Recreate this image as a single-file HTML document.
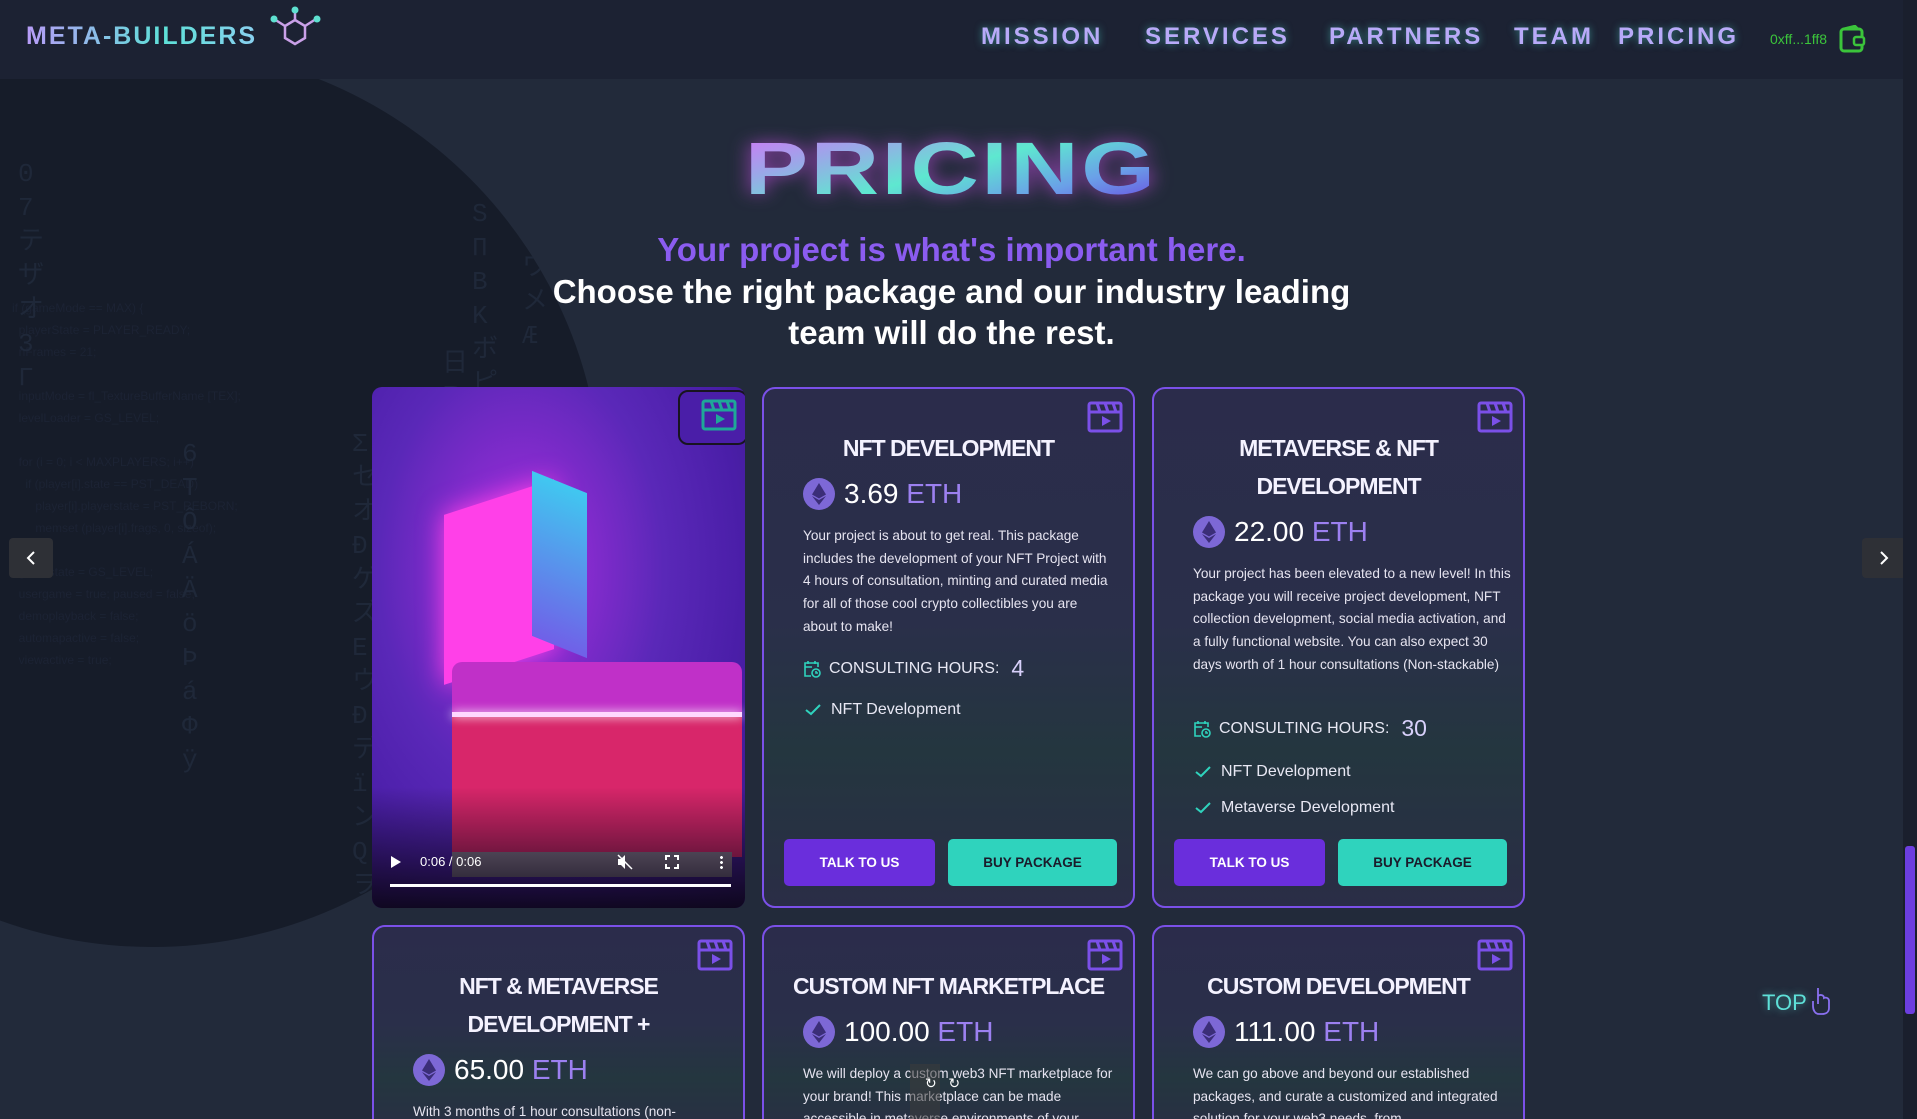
<!DOCTYPE html>
<html><head><meta charset="utf-8"><style>
*{margin:0;padding:0;box-sizing:border-box}
html,body{width:1917px;height:1119px;overflow:hidden;background:#222a3a;font-family:"Liberation Sans","DejaVu Sans",sans-serif;color:#fff;position:relative}
.circle{position:absolute;left:-298px;top:47px;width:900px;height:900px;border-radius:50%;background:#161c29;overflow:hidden}
.mx{position:absolute;color:#1f2839;font-family:"Liberation Mono","Noto Sans CJK JP",monospace;font-size:26px;line-height:34px;width:30px;word-break:break-all}
.code{position:absolute;color:#1c2334;font-size:12px;line-height:22px;white-space:pre}
header{position:absolute;left:0;top:0;width:1903px;height:79px;background:#1c2233}
.logo{position:absolute;left:26px;top:22px;font-weight:bold;font-size:25px;letter-spacing:2px;background:linear-gradient(90deg,#b89cf8,#5ee0d8 60%,#8ad0f0);-webkit-background-clip:text;color:transparent}
nav a{position:absolute;top:23px;font-weight:bold;font-size:24px;letter-spacing:3px;color:#b8aaf8;text-shadow:0 0 8px rgba(80,220,210,.55)}
.addr{position:absolute;left:1770px;top:31px;color:#3bc43b;font-size:14px}
.scroll{position:absolute;left:1903px;top:0;width:14px;height:1119px;background:#1a1f2d}
.thumb{position:absolute;left:1905px;top:846px;width:10px;height:168px;background:#6c3ee0;border-radius:3px}
h1{position:absolute;left:0;width:1903px;top:129px;text-align:center;font-size:74px;font-weight:bold;line-height:80px}
h1 span{display:inline-block;transform:scaleX(1.28);letter-spacing:2px;background:linear-gradient(160deg,#d672f8 0%,#9aa8e8 25%,#5ee8d0 50%,#6aa0e8 75%,#6a40e0 100%);-webkit-background-clip:text;color:transparent;filter:drop-shadow(0 0 8px rgba(200,80,230,.7))}
.sub{position:absolute;left:0;width:1903px;text-align:center;font-weight:bold;font-size:33px;line-height:41px}
.card{position:absolute;width:373px;border:2px solid #7b50e8;border-radius:13px;background:linear-gradient(180deg,#2b2c4b 0%,#2a2f4a 45%,#24363f 70%,#2a2d46 100%);overflow:hidden}
.clap{position:absolute;right:10px;top:12px}
.ct{position:absolute;left:0;width:100%;text-align:center;font-weight:bold;font-size:23px;letter-spacing:-1px;line-height:38px;color:#f4f2ff}
.price{position:absolute;left:39px;font-size:28px;display:flex;align-items:center;gap:9px;color:#fff}
.price b{font-weight:normal;color:#9c80f0}
.desc{position:absolute;left:39px;width:316px;font-size:13.6px;line-height:22.7px;color:#e6e4f0}
.ch{position:absolute;left:39px;font-size:16px;color:#e8e8f4;display:flex;align-items:center;gap:8px}
.ch big{font-size:23px;color:#d8d0fa;margin-left:4px}
.it{position:absolute;left:41px;font-size:16px;color:#e8e8f4;display:flex;align-items:center;gap:10px}
.btn{position:absolute;top:450px;height:47px;border-radius:5px;font-weight:bold;font-size:13.5px;display:flex;align-items:center;justify-content:center}
.talk{left:20px;width:151px;background:#6a2edc;color:#fff}
.buy{left:184px;width:169px;background:#2fd3bd;color:#1b1b2b}
.arr{position:absolute;width:44px;height:40px;border-radius:4px;background:#2e3036;color:#fff;display:flex;align-items:center;justify-content:center}
</style></head><body>
<div class="circle">
 <div class="code" style="left:310px;top:250px">if (gameMode == MAX) {
  playerState = PLAYER_READY;
  nFrames = 21;

  inputMode = fl_TextureBufferName [TEX];
  levelLoader = GS_LEVEL;

  for (i = 0; i &lt; MAXPLAYERS; i++)
    if (player[i].state == PST_DEAD)
       player[i].playerstate = PST_REBORN;
       memset (player[i].frags, 0, sizeof);

  gamestate = GS_LEVEL;
  usergame = true; paused = false;
  demoplayback = false;
  automapactive = false;
  viewactive = true;</div>
 <div class="mx" style="left:316px;top:110px">0 7 テザオ 3 Γ</div>
 <div class="mx" style="left:770px;top:150px">SΠBKボピò</div>
 <div class="mx" style="left:820px;top:170px">ΨワメÆ</div>
 <div class="mx" style="left:480px;top:390px">6 T Ô Á Ä ö Þ á Φ ÿ</div>
 <div class="mx" style="left:650px;top:380px">Σ セ オ Ð ゲ ズ E ウ Ð デ ï ン Q ヲ</div>
 <div class="mx" style="left:740px;top:300px">日 ℝ 五 ó ジ ワ Î ヰ セ ス ç b ë Í ü タ</div>
</div>

<header>
 <div class="logo">META-BUILDERS</div>
 <svg style="position:absolute;left:266px;top:4px" width="60" height="46" viewBox="0 0 60 46"><g stroke="#c9a0e8" stroke-width="2.5" fill="none"><path d="M29 16 L39 22 L39 34 L29 40 L19 34 L19 22 Z"/><path d="M29 16 V6 M39 22 L50 15 M19 22 L8 15"/></g><circle cx="29" cy="6" r="3.5" fill="#5ee0d0"/><circle cx="51" cy="15" r="3.5" fill="#5ee0d0"/><circle cx="8" cy="15" r="3.5" fill="#5ee0d0"/></svg>
 <nav><a style="left:981px">MISSION</a><a style="left:1145px">SERVICES</a><a style="left:1329px">PARTNERS</a><a style="left:1514px">TEAM</a><a style="left:1618px">PRICING</a></nav>
 <div class="addr">0xff...1ff8</div>
 <svg style="position:absolute;left:1839px;top:25px" width="27" height="28" viewBox="0 0 27 28"><rect x="2" y="4" width="21" height="22" rx="3" fill="none" stroke="#3bc43b" stroke-width="3"/><path d="M4 4 L16 1 L19 4" fill="none" stroke="#3bc43b" stroke-width="2.5"/><rect x="15" y="12" width="10" height="8" rx="2" fill="#1c2233" stroke="#3bc43b" stroke-width="2.5"/></svg>
</header>

<h1><span>PRICING</span></h1>
<div class="sub" style="top:229px;color:#8b5cf0">Your project is what's important here.</div>
<div class="sub" style="top:271px">Choose the right package and our industry leading<br>team will do the rest.</div>

<div style="position:absolute;left:372px;top:387px;width:373px;height:521px;border-radius:10px;overflow:hidden;background:radial-gradient(ellipse at 40% 35%,#c040e0 0%,#8a2cd0 18%,#5a28b8 45%,#4a1ea8 70%,#3a1a80 100%)">
 <div style="position:absolute;left:72px;top:110px;width:110px;height:170px;background:#ff40e8;transform:skewY(-18deg);box-shadow:0 0 25px #ff40e8"></div>
 <div style="position:absolute;left:160px;top:95px;width:55px;height:165px;background:linear-gradient(#40c8f0,#7060e8);transform:skewY(22deg)"></div>
 <div style="position:absolute;left:80px;top:275px;width:290px;height:65px;background:#c030c8;border-radius:10px 10px 0 0"></div>
 <div style="position:absolute;left:80px;top:330px;width:290px;height:140px;background:#d8266a"></div>
 <div style="position:absolute;left:80px;top:325px;width:290px;height:5px;background:#ffd8ff;box-shadow:0 0 10px #fff"></div>
 <div style="position:absolute;left:80px;top:465px;width:280px;height:25px;background:#8a7e90"></div>
 <div style="position:absolute;left:0;top:400px;width:100%;height:121px;background:linear-gradient(transparent,rgba(10,5,20,.9))"></div>
 <div style="position:absolute;left:306px;top:3px;width:70px;height:55px;border:2px solid #181420;border-radius:10px;background:#4a1ea8"></div>
 <svg class="clap" style="top:12px;right:8px" width="36" height="32" viewBox="0 0 36 32"><g fill="none" stroke="#1fa898" stroke-width="3"><rect x="2" y="2" width="32" height="28" rx="2"/><path d="M2 11 H34 M10 2 L13 11 M18 2 L21 11 M26 2 L29 11"/></g><path d="M15 15 L24 20 L15 25Z" fill="#1fa898"/></svg>
 <svg style="position:absolute;left:18px;top:468px" width="12" height="14"><path d="M1 1 L11 7 L1 13Z" fill="#fff"/></svg>
 <div style="position:absolute;left:48px;top:467px;font-size:13px;color:#fff">0:06 / 0:06</div>
 <svg style="position:absolute;left:245px;top:467px" width="16" height="16" viewBox="0 0 16 16"><path d="M1 5 H4 L8 1 V15 L4 11 H1Z" fill="#fff"/><path d="M1 1 L15 15" stroke="#fff" stroke-width="1.5"/></svg>
 <svg style="position:absolute;left:293px;top:468px" width="14" height="14"><path d="M1 5V1H5M9 1H13V5M13 9V13H9M5 13H1V9" fill="none" stroke="#fff" stroke-width="2"/></svg>
 <div style="position:absolute;left:348px;top:468px;width:3px;height:14px;background:radial-gradient(circle,#fff 1.4px,transparent 1.5px) 0 0/3px 5px"></div>
 <div style="position:absolute;left:18px;top:497px;width:341px;height:3px;background:#fff"></div>
</div>

<svg width="0" height="0" style="position:absolute"><defs>
<symbol id="clap" viewBox="0 0 36 32"><g fill="none" stroke="#7b50e8" stroke-width="3"><rect x="2" y="2" width="32" height="28" rx="2"/><path d="M2 11 H34 M10 2 L13 11 M18 2 L21 11 M26 2 L29 11"/></g><path d="M15 15 L24 20 L15 25Z" fill="#7b50e8"/></symbol>
<symbol id="eth" viewBox="0 0 32 32"><circle cx="16" cy="16" r="16" fill="#7d68d6"/><path d="M16 5 L23 16.5 L16 20.5 L9 16.5Z" fill="#3b2e78"/><path d="M16 22 L23 18 L16 27 L9 18Z" fill="#3b2e78"/></symbol>
<symbol id="cal" viewBox="0 0 18 18"><g fill="none" stroke="#2fd3bd" stroke-width="1.6"><path d="M8 16 H2 V3 H15 V7 M2 7 H9 M5 1 V4 M12 1 V4"/><circle cx="13" cy="13" r="4"/><path d="M13 11 V13 H15"/></g></symbol>
<symbol id="chk" viewBox="0 0 16 12"><path d="M1 6 L6 10 L15 1" fill="none" stroke="#2fd3bd" stroke-width="2"/></symbol>
</defs></svg>

<div class="card" style="left:762px;top:387px;height:521px">
 <svg class="clap" width="36" height="32"><use href="#clap"/></svg>
 <div class="ct" style="top:40px">NFT DEVELOPMENT</div>
 <div class="price" style="top:89px"><svg width="32" height="32"><use href="#eth"/></svg><span>3.69 <b>ETH</b></span></div>
 <div class="desc" style="top:136px;width:305px">Your project is about to get real. This package includes the development of your NFT Project with 4 hours of consultation, minting and curated media for all of those cool crypto collectibles you are about to make!</div>
 <div class="ch" style="top:266px"><svg width="18" height="18"><use href="#cal"/></svg>CONSULTING HOURS: <big>4</big></div>
 <div class="it" style="top:312px"><svg width="16" height="12"><use href="#chk"/></svg>NFT Development</div>
 <div class="btn talk">TALK TO US</div><div class="btn buy">BUY PACKAGE</div>
</div>

<div class="card" style="left:1152px;top:387px;height:521px">
 <svg class="clap" width="36" height="32"><use href="#clap"/></svg>
 <div class="ct" style="top:40px">METAVERSE &amp; NFT<br>DEVELOPMENT</div>
 <div class="price" style="top:127px"><svg width="32" height="32"><use href="#eth"/></svg><span>22.00 <b>ETH</b></span></div>
 <div class="desc" style="top:174px;width:320px">Your project has been elevated to a new level! In this package you will receive project development, NFT collection development, social media activation, and a fully functional website. You can also expect 30 days worth of 1 hour consultations (Non-stackable)</div>
 <div class="ch" style="top:326px"><svg width="18" height="18"><use href="#cal"/></svg>CONSULTING HOURS: <big>30</big></div>
 <div class="it" style="top:374px"><svg width="16" height="12"><use href="#chk"/></svg>NFT Development</div>
 <div class="it" style="top:410px"><svg width="16" height="12"><use href="#chk"/></svg>Metaverse Development</div>
 <div class="btn talk">TALK TO US</div><div class="btn buy">BUY PACKAGE</div>
</div>

<div class="card" style="left:372px;top:925px;height:220px">
 <svg class="clap" width="36" height="32"><use href="#clap"/></svg>
 <div class="ct" style="top:40px">NFT &amp; METAVERSE<br>DEVELOPMENT +</div>
 <div class="price" style="top:127px"><svg width="32" height="32"><use href="#eth"/></svg><span>65.00 <b>ETH</b></span></div>
 <div class="desc" style="top:174px">With 3 months of 1 hour consultations (non-stackable)</div>
</div>
<div class="card" style="left:762px;top:925px;height:220px">
 <svg class="clap" width="36" height="32"><use href="#clap"/></svg>
 <div class="ct" style="top:40px">CUSTOM NFT MARKETPLACE</div>
 <div class="price" style="top:89px"><svg width="32" height="32"><use href="#eth"/></svg><span>100.00 <b>ETH</b></span></div>
 <div class="desc" style="top:136px">We will deploy a custom web3 NFT marketplace for your brand! This marketplace can be made accessible in metaverse environments of your</div>
</div>
<div class="card" style="left:1152px;top:925px;height:220px">
 <svg class="clap" width="36" height="32"><use href="#clap"/></svg>
 <div class="ct" style="top:40px">CUSTOM DEVELOPMENT</div>
 <div class="price" style="top:89px"><svg width="32" height="32"><use href="#eth"/></svg><span>111.00 <b>ETH</b></span></div>
 <div class="desc" style="top:136px">We can go above and beyond our established packages, and curate a customized and integrated solution for your web3 needs, from</div>
</div>
<div style="position:absolute;left:910px;top:1064px;width:30px;height:55px;background:rgba(60,60,60,.55)"></div>
<div style="position:absolute;left:925px;top:1075px;color:#fff;font-size:14px">↻ &nbsp; ↻</div>

<div class="arr" style="left:9px;top:538px"><svg width="12" height="16"><path d="M9 2 L3 8 L9 14" fill="none" stroke="#fff" stroke-width="2"/></svg></div>
<div class="arr" style="left:1862px;top:538px"><svg width="12" height="16"><path d="M3 2 L9 8 L3 14" fill="none" stroke="#fff" stroke-width="2"/></svg></div>

<div style="position:absolute;left:1762px;top:990px;font-size:22px;color:#5ee0d8;text-shadow:0 0 8px rgba(94,224,216,.6)">TOP</div>
<svg style="position:absolute;left:1810px;top:986px" width="22" height="30" viewBox="0 0 22 30"><path d="M8 2 V18 M8 10 C10 8 14 9 14 12 C16 11 19 12 19 15 V22 C19 26 16 28 12 28 H9 C5 28 3 24 3 20 V15" fill="none" stroke="#8a70f0" stroke-width="1.8"/></svg>

<div class="scroll"></div><div class="thumb"></div>
</body></html>
